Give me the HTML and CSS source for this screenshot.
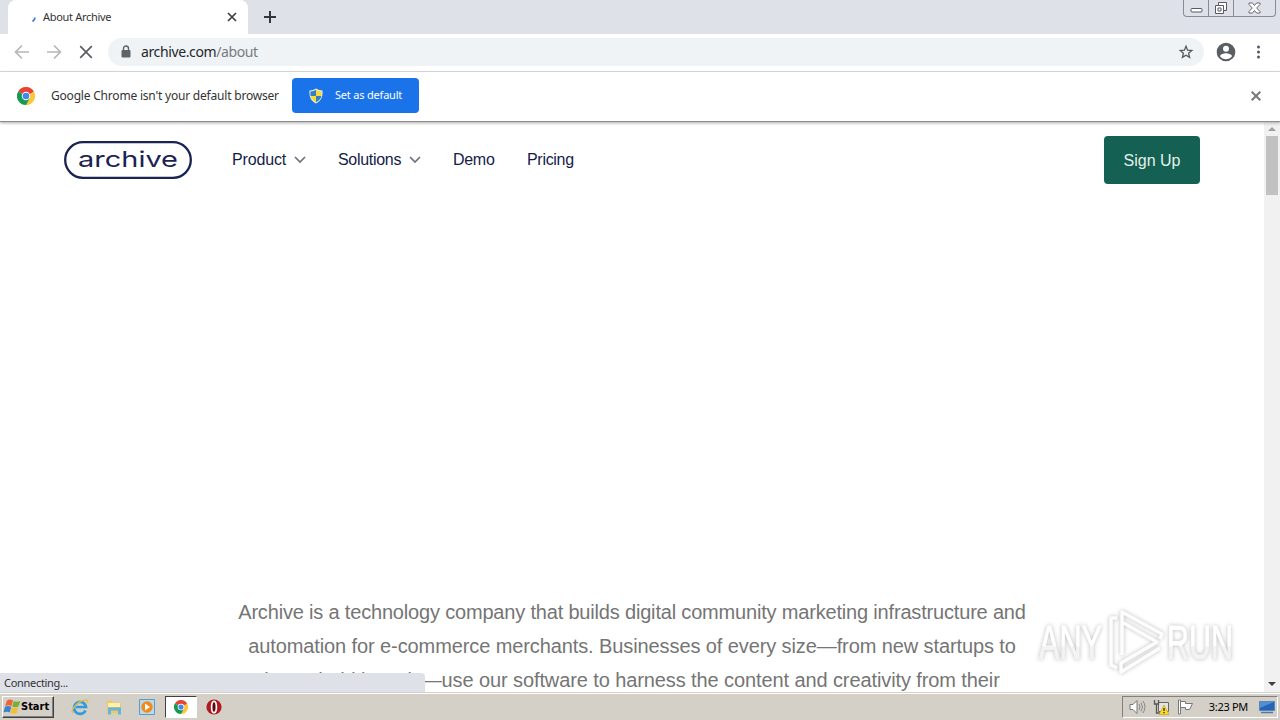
FILE: index.html
```html
<!DOCTYPE html>
<html lang="en">
<head>
  <meta charset="UTF-8" />
  <meta name="viewport" content="width=device-width, initial-scale=1.0"/>
  <title>About Archive</title>
  <link rel="stylesheet" href="styles.css">
</head>
<body>
  <svg width="0" height="0" class="defs">
    <symbol id="chrome" viewBox="0 0 24 24">
      <circle cx="12" cy="12" r="12" fill="#fff"/>
      <path d="M12 12 1.6 6A12 12 0 0 1 22.4 6Z" fill="#ea4335"/>
      <path d="M12 12 22.4 6A12 12 0 0 1 12 24Z" fill="#fbc734"/>
      <path d="M1.6 6A12 12 0 0 0 12 24L17 14.500 12 12Z" fill="#159a52"/>
      <path d="M12 6H22.400L12 12Z" fill="#ea4335"/>
      <circle cx="12" cy="12" r="5.700" fill="#fff"/>
      <circle cx="12" cy="12" r="4.400" fill="#4285f4"/>
    </symbol>
  </svg>

  <div class="tabstrip">
    <div class="tab-edge"></div>
    <div class="tab">
      <svg class="spinner" width="16" height="16" viewBox="0 0 16 16"><path d="M10 8.500Q9.700 11 7.500 12.500" fill="none" stroke="#3574e2" stroke-width="1.800"/></svg>
      <span class="tab-title">About Archive</span>
      <svg class="tab-close" width="10" height="10" viewBox="0 0 10 10"><path d="M1 1 9 9M9 1 1 9" stroke="#3c4043" stroke-width="1.700"/></svg>
    </div>
    <svg class="new-tab" width="12" height="12" viewBox="0 0 12 12"><path d="M6 0V12M0 6H12" stroke="#33363b" stroke-width="2"/></svg>
    <div class="window-buttons">
      <span><svg width="13" height="14" viewBox="0 0 13 14"><rect x="1" y="7.500" width="11" height="3.500" rx="1" fill="#fff" stroke="#555a66"/></svg></span>
      <span><svg width="14" height="14" viewBox="0 0 14 14"><path d="M4.500 1.500h8v8h-3v3h-8v-8h3z" fill="#fff" stroke="#555a66"/><path d="M4.500 4.500h5v5M4 7h3v3H4z" fill="none" stroke="#555a66"/></svg></span>
      <span class="wide"><svg width="13" height="12" viewBox="0 0 13 12"><path d="M1 1h3.500l2 2.500L8.500 1H12v1.500L8.700 6 12 9.500V11H8.500l-2-2.500-2 2.500H1V9.500L4.300 6 1 2.500z" fill="#fff" stroke="#656a75"/></svg></span>
    </div>
  </div>

  <div class="toolbar">
    <svg width="16" height="16" viewBox="0 0 16 16"><path d="M15 8H2M8 1.500 1.500 8 8 14.500" fill="none" stroke="#b5b7ba" stroke-width="1.700"/></svg>
    <svg width="16" height="16" viewBox="0 0 16 16"><path d="M1 8H14M8 1.500 14.500 8 8 14.500" fill="none" stroke="#b5b7ba" stroke-width="1.700"/></svg>
    <svg width="16" height="16" viewBox="0 0 16 16"><path d="M2.200 2.200 13.800 13.800M13.800 2.200 2.200 13.800" stroke="#5a5d61" stroke-width="1.700"/></svg>
    <div class="omnibox">
      <svg width="10" height="14" viewBox="0 0 10 14"><rect x="0.500" y="5" width="9" height="7.500" rx="1" fill="#5f6368"/><path d="M2.500 5V3.500a2.500 2.500 0 0 1 5 0V5" fill="none" stroke="#5f6368" stroke-width="1.400"/></svg>
      <span class="url">archive.com<span>/about</span></span>
      <svg class="star" width="16" height="16" viewBox="0 0 16 16"><path d="m8 2.300 1.600 3.900 4.200.4-3.200 2.700 1 4.100L8 11.200l-3.600 2.200 1-4.100-3.200-2.700 4.200-.4z" fill="none" stroke="#55595e" stroke-width="1.300"/></svg>
    </div>
    <svg class="avatar" width="20" height="20" viewBox="0 0 20 20"><circle cx="10" cy="10" r="9.300" fill="#5a5d62"/><circle cx="10" cy="6.800" r="3" fill="#fff"/><path d="M4 14.200c0-2 4-3 6-3s6 1 6 3a7.500 7.500 0 0 1-12 0z" fill="#fff"/></svg>
    <svg class="menu" width="4" height="14" viewBox="0 0 4 14"><g fill="#55585c"><circle cx="2.500" cy="2" r="1.500"/><circle cx="2.500" cy="7" r="1.500"/><circle cx="2.500" cy="12" r="1.500"/></g></svg>
  </div>

  <div class="infobar">
    <svg width="18" height="18"><use href="#chrome"/></svg>
    <span class="info-text">Google Chrome isn't your default browser</span>
    <div class="set-default">
      <svg width="14" height="16" viewBox="0 0 14 16">
        <path d="M7 .5Q10 2.500 13.500 2.500C14 9 12 13 7 15.500 2 13 0 9 .5 2.500Q4 2.500 7 .5z" fill="#e6edda"/>
        <path d="M7 1.800V8H1.500Q1.300 6 1.500 3.500 5 3.300 7 1.800z" fill="#347fc4"/><path d="M7 1.800V8h5.500Q12.700 6 12.500 3.500 9 3.300 7 1.800z" fill="#f8da3b"/>
        <path d="M7 8v6.300Q2.500 12 1.600 8z" fill="#f8da3b"/><path d="M7 8v6.300Q11.500 12 12.400 8z" fill="#347fc4"/>
      </svg>
      <span>Set as default</span>
    </div>
    <svg class="info-close" width="10" height="10" viewBox="0 0 10 10"><path d="M.7.7 9.300 9.300M9.300.7.7 9.300" stroke="#76797c" stroke-width="2"/></svg>
  </div>

  <div class="viewport">
    <div class="page">
      <header>
        <div class="logo"><svg width="128" height="38" viewBox="0 0 128 38"><rect x="1.200" y="1.200" width="125.600" height="35.600" rx="17.800" fill="none" stroke="#1a2352" stroke-width="2.300"/><text x="14" y="26" textLength="100" lengthAdjust="spacingAndGlyphs">archive</text></svg></div>
        <nav>
          <span class="link product">Product</span>
          <svg width="12" height="8" viewBox="0 0 12 8"><path d="m1 1 5 5 5-5" fill="none" stroke="#70727f" stroke-width="1.700"/></svg>
          <span class="link solutions">Solutions</span>
          <svg width="12" height="8" viewBox="0 0 12 8"><path d="m1 1 5 5 5-5" fill="none" stroke="#70727f" stroke-width="1.700"/></svg>
          <span class="link demo">Demo</span>
          <span class="link pricing">Pricing</span>
        </nav>
        <div class="signup">Sign Up</div>
      </header>
      <p class="intro">
        <span class="first">Archive is a technology company that builds digital community marketing infrastructure and</span>
        <span>automation for e-commerce merchants. Businesses of every size—from new startups to</span>
        <span>household brands—use our software to harness the content and creativity from their</span>
      </p>
    </div>
    <div class="scrollbar">
      <svg width="8" height="4" viewBox="0 0 8 4"><path d="M0 4 4 0l4 4z" fill="#a0a0a0"/></svg>
      <div class="thumb"></div>
      <svg class="down" width="8" height="4" viewBox="0 0 8 4"><path d="m0 0 4 4 4-4z" fill="#404040"/></svg>
    </div>
    <div class="status">Connecting...</div>
    <svg class="watermark" width="220" height="74" viewBox="0 0 220 74">
      <defs><linearGradient id="fade" x2="0" y2="1"><stop offset=".56" stop-color="#fff"/><stop offset=".58" stop-color="#f3f3f3"/></linearGradient></defs>
      <g fill="url(#fade)" stroke="url(#fade)">
        <text x="9" y="55" textLength="63" lengthAdjust="spacingAndGlyphs">ANY</text>
        <text x="137" y="55" textLength="66" lengthAdjust="spacingAndGlyphs">RUN</text>
      </g>
      <g fill="none" stroke="#fdfdfd" stroke-width="3.500" stroke-linejoin="round">
        <path d="M87 14H81V61l6 3M92 51V8l40 22-2 5"/>
        <path d="M92 18 127 38 91 59v9l39-24"/>
      </g>
    </svg>
  </div>

  <div class="taskbar">
    <div class="start">
      <svg width="18" height="16" viewBox="0 0 18 16"><path d="M4 1.500q3-2 6 0L8.500 7q-3-1.500-6.300 0z" fill="#ef6137"/><path d="M10.800 2q3 1.500 6.500 0L15.500 7.500q-3 1.500-6.300 0z" fill="#78ae38"/><path d="M2 7.800q3-1.500 6.300 0l-1.500 5.700q-3-1.500-6.300 0z" fill="#3a83ce"/><path d="M9 8.300q3 1.500 6.200 0l-1.500 5.700q-3 1.500-6.200 0z" fill="#f4be31"/></svg>
      <b>Start</b>
    </div>
    <div class="app"><svg width="18" height="18" viewBox="0 0 18 18"><path d="M14.500 12.500A6 6 0 1 1 15 9H5" fill="none" stroke="#2f9ddd" stroke-width="2.700"/><path d="M2 15C-2 14 7 2 15 2q3 0 1 3" fill="none" stroke="#e7bd45" stroke-width="1.300"/></svg></div>
    <div class="app"><svg width="18" height="18" viewBox="0 0 18 18"><path d="M2 2.500h5l1 2h8v11H2z" fill="#e8cb6c"/><path d="M3 5h12v4H3z" fill="#fff1ac"/><path d="M3 16.500V9.500h13v7h-3v-4H6v4z" fill="#69b4d8"/></svg></div>
    <div class="app"><svg width="18" height="18" viewBox="0 0 18 18"><path d="M1.500 1.500h15v15h-15z" fill="#b9d9ee" stroke="#5b9cc8"/><circle cx="9" cy="9" r="5.700" fill="#f28a18"/><path d="m7 5.500 5 3.500-5 3.500z" fill="#fff"/></svg></div>
    <div class="app active"><svg width="14" height="14"><use href="#chrome"/></svg></div>
    <div class="app"><svg width="16" height="16" viewBox="0 0 16 16"><circle cx="8" cy="8" r="7.600" fill="#b21820"/><ellipse cx="8" cy="8" rx="2.400" ry="5.700" fill="#5c0b10" stroke="#fff" stroke-width="1.700"/></svg></div>
    <div class="tray">
      <svg width="17" height="16" viewBox="0 0 17 16"><path d="M1 5.500h3l4-4v13l-4-4H1z" fill="#fff" stroke="#777"/><path d="M10 5q2 3 0 6M12 3.500q3 4.500 0 9M14 2q4 6 0 12" fill="none" stroke="#888"/></svg>
      <svg width="17" height="16" viewBox="0 0 17 16"><path d="M5.500 3.500h10v9h-10z" fill="#e1e3e5" stroke="#666"/><path d="M1.500 1v4h4V1M3.500 5v9h4" fill="none" stroke="#555" stroke-width="1.300"/><path d="m11 6 5 9.500H6z" fill="#ffdb24" stroke="#c99b12" stroke-width=".6"/><path d="M11 9v3M11 13v1.300" stroke="#222" stroke-width="1.300"/></svg>
      <svg width="17" height="16" viewBox="0 0 17 16"><path d="M1.500 1h2v14h-2z" fill="#fff" stroke="#777"/><path d="M3.500 2.500h5v2h7l-3 6h-4v-2h-5z" fill="#fff" stroke="#777"/></svg>
      <span class="clock">3:23 PM</span>
      <svg width="16" height="14" viewBox="0 0 16 14"><path d="M.5 1.500h15v9H.5z" fill="#2465b9" stroke="#5686bd"/><path d="M1 2h14L1 8z" fill="#548ed0"/><path d="M2 12.500h12" stroke="#53779f" stroke-width="1.500"/></svg>
    </div>
  </div>
</body>
</html>
```
FILE: styles.css
```css
* {
  box-sizing: border-box;
}

body {
  margin: 0;
  width: 1280px;
  height: 720px;
  overflow: hidden;
  display: flex;
  flex-direction: column;
  background: #fff;
  font-family: "Noto Sans", sans-serif;
  color: #333;
}

svg {
  display: block;
  flex-shrink: 0;
}

.defs {
  position: absolute;
}

span {
  white-space: nowrap;
}

/* browser */
.tabstrip {
  height: 34px;
  flex-shrink: 0;
  display: flex;
  background: #dee1e8;
}

.tab-edge {
  width: 8px;
}

.tab {
  width: 240px;
  background: #fff;
  border-radius: 8px 8px 0 0;
  display: flex;
  align-items: center;
  padding: 0 11px 0 17px;
}

.tab-title {
  margin-left: 2px;
  padding-bottom: 1px;
  font-size: 11px;
  letter-spacing: -0.3px;
}

.tab-close {
  margin-left: auto;
}

.new-tab {
  margin: 11px 0 0 16px;
}

.window-buttons {
  display: flex;
  width: 93px;
  height: 17px;
  margin-left: auto;
  margin-right: 4px;
  border: 1px solid #858b98;
  border-top: 0;
  border-radius: 0 0 4px 4px;
}

.window-buttons span {
  width: 25px;
  display: flex;
  align-items: center;
  justify-content: center;
  border-right: 1px solid #858b98;
}

.window-buttons .wide {
  width: 41px;
  border: 0;
}

.toolbar {
  height: 38px;
  flex-shrink: 0;
  display: flex;
  align-items: center;
  gap: 16px;
  padding: 0 20px 2px 14px;
  border-bottom: 1px solid #d9dcdf;
}

.omnibox {
  width: 1096px;
  height: 28px;
  margin-left: -2px;
  display: flex;
  align-items: center;
  padding: 0 10px 0 13px;
  border-radius: 14px;
  background: #f0f3f5;
}

.url {
  margin-left: 10px;
  font-size: 14px;
  letter-spacing: -0.38px;
  color: #24272b;
}

.url span {
  color: #777b80;
}

.star {
  margin-left: auto;
}

.avatar {
  margin-left: -4px;
}

.menu {
  margin-left: 4px;
}

.infobar {
  height: 50px;
  flex-shrink: 0;
  display: flex;
  align-items: center;
  padding: 0 19px 2px 17px;
  border-bottom: 1px solid #8c8c8c;
  box-shadow: 0 1px 3px #aaa;
  z-index: 1;
}

.info-text {
  width: 229px;
  margin-left: 16px;
  font-size: 12px;
  letter-spacing: -0.2px;
}

.set-default {
  display: flex;
  align-items: center;
  gap: 12px;
  width: 127px;
  height: 35px;
  margin-left: 12px;
  padding-left: 17px;
  border-radius: 4px;
  background: #1a73e8;
  color: #fff;
  font-size: 11px;
  letter-spacing: -0.2px;
}

.set-default span {
  padding-bottom: 2px;
}

.info-close {
  margin-left: auto;
}

/* page */
.viewport {
  position: relative;
  height: 570px;
  flex-shrink: 0;
  display: flex;
  overflow: hidden;
}

.page {
  width: 1264px;
  font-family: "Liberation Sans", sans-serif;
}

header {
  height: 76px;
  display: flex;
  align-items: center;
  padding: 0 64px;
}

.logo text {
  font: 22px Inter, sans-serif;
  fill: #1a2352;
}

nav {
  display: flex;
  align-items: center;
  margin-left: 40px;
}

.link {
  font-size: 16px;
  letter-spacing: -0.3px;
  color: #151c48;
}

.product {
  width: 62px;
  letter-spacing: -0.15px;
}

.solutions {
  width: 71px;
  margin-left: 32px;
}

.demo {
  width: 42px;
  margin-left: 32px;
}

.pricing {
  margin-left: 32px;
}

.signup {
  width: 96px;
  height: 48px;
  margin-left: auto;
  line-height: 49px;
  text-align: center;
  border-radius: 4px;
  background: #146052;
  color: #e4f0ed;
  font-size: 16px;
}

.intro {
  margin: 397px 0 0;
  text-align: center;
  color: #757575;
  font-size: 20px;
  line-height: 34px;
  letter-spacing: -0.1px;
}

.intro span {
  display: block;
}

.intro .first {
  letter-spacing: -0.18px;
}

.scrollbar {
  width: 16px;
  display: flex;
  flex-direction: column;
  align-items: center;
  padding: 5px 0 6px;
  background: #f1f1f1;
}

.thumb {
  width: 12px;
  height: 59px;
  margin-top: 5px;
  background: #c1c1c1;
}

.down {
  margin-top: auto;
}

.status {
  position: absolute;
  left: 0;
  bottom: 0;
  width: 425px;
  height: 19px;
  padding-left: 4px;
  background: #dee1e8;
  border-radius: 0 4px 0 0;
  font-size: 11px;
  line-height: 20px;
  letter-spacing: -0.3px;
}

.watermark {
  position: absolute;
  left: 1030px;
  top: 482px;
  filter: drop-shadow(0 0 2px #bbb);
}

.watermark text {
  font: 48px "Liberation Sans", sans-serif;
}

/* taskbar */
.taskbar {
  height: 28px;
  flex-shrink: 0;
  display: flex;
  align-items: center;
  padding: 0 2px;
  border-top: 1px solid #d4d0c8;
  box-shadow: inset 0 1px #fff;
  background: #d4d0c8;
}

.start {
  width: 52px;
  height: 22px;
  display: flex;
  align-items: center;
  border: 1px solid;
  border-color: #fff #404040 #404040 #fff;
  box-shadow: inset -1px -1px #808080;
  font-size: 12px;
  color: #000;
}

.start b {
  font-family: "DejaVu Sans Condensed", "DejaVu Sans", sans-serif;
  font-size: 11px;
}

.app {
  width: 32px;
  height: 22px;
  display: flex;
  align-items: center;
  justify-content: center;
  margin-right: 1.5px;
}

.start + .app {
  margin-left: 10px;
}

.active {
  background: #fff;
  border: 1px solid;
  border-color: #404040 #fff #fff #404040;
}

.tray {
  display: flex;
  align-items: center;
  width: 156px;
  height: 22px;
  margin-left: auto;
  padding: 0 2px 0 6px;
  gap: 7px;
  border: 1px solid;
  border-color: #808080 #fff #fff #808080;
}

.clock {
  margin-left: auto;
  margin-right: 4px;
  font-size: 11px;
  letter-spacing: -0.3px;
  color: #000;
}
```
